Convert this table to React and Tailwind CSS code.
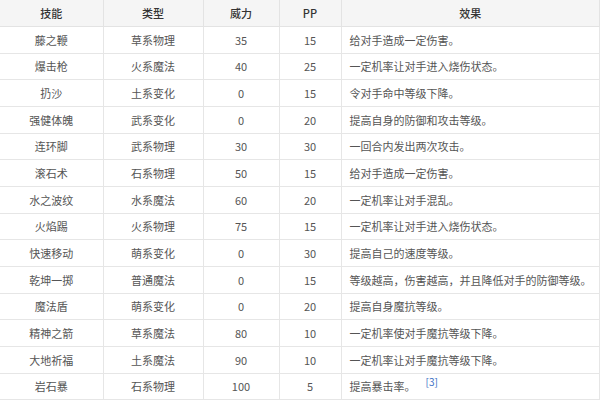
import React from 'react';

const rows = [
  ['藤之鞭', '草系物理', '35', '15', '给对手造成一定伤害。'],
  ['爆击枪', '火系魔法', '40', '25', '一定机率让对手进入烧伤状态。'],
  ['扔沙', '土系变化', '0', '15', '令对手命中等级下降。'],
  ['强健体魄', '武系变化', '0', '20', '提高自身的防御和攻击等级。'],
  ['连环脚', '武系物理', '30', '30', '一回合内发出两次攻击。'],
  ['滚石术', '石系物理', '50', '15', '给对手造成一定伤害。'],
  ['水之波纹', '水系魔法', '60', '20', '一定机率让对手混乱。'],
  ['火焰踢', '火系物理', '75', '15', '一定机率让对手进入烧伤状态。'],
  ['快速移动', '萌系变化', '0', '30', '提高自己的速度等级。'],
  ['乾坤一掷', '普通魔法', '0', '15', '等级越高，伤害越高，并且降低对手的防御等级。'],
  ['魔法盾', '萌系变化', '0', '20', '提高自身魔抗等级。'],
  ['精神之箭', '草系魔法', '80', '10', '一定机率使对手魔抗等级下降。'],
  ['大地祈福', '土系魔法', '90', '10', '一定机率让对手魔抗等级下降。'],
  ['岩石暴', '石系物理', '100', '5', '提高暴击率。'],
];

const App = () => {
  return (
    <div className="w-[600px] h-[400px] overflow-hidden bg-white" style={{ fontFamily: '"Noto Sans CJK SC", "Noto Sans", sans-serif' }}>
      <table className="w-full table-fixed border-collapse text-[11px] text-[#555]">
        <colgroup>
          <col className="w-[103px]" />
          <col className="w-[100px]" />
          <col className="w-[76px]" />
          <col className="w-[62px]" />
          <col />
        </colgroup>
        <thead>
          <tr className="h-[26.67px] bg-[#f5f5f5]">
            <th className="font-medium text-[#333] border-r border-b border-[#e3e3e3]">技能</th>
            <th className="font-medium text-[#333] border-r border-b border-[#e3e3e3]">类型</th>
            <th className="font-medium text-[#333] border-r border-b border-[#e3e3e3]">威力</th>
            <th className="font-medium text-[#333] border-r border-b border-[#e3e3e3]">PP</th>
            <th className="font-medium text-[#333] border-r border-b border-[#e3e3e3]">效果</th>
          </tr>
        </thead>
        <tbody>
          {rows.map((r, i) => (
            <tr key={i} className="h-[26.67px]">
              <td className="text-center border-r border-b border-[#e6e6e6]">{r[0]}</td>
              <td className="text-center border-r border-b border-[#e6e6e6]">{r[1]}</td>
              <td className="text-center border-r border-b border-[#e6e6e6]">{r[2]}</td>
              <td className="text-center border-r border-b border-[#e6e6e6]">{r[3]}</td>
              <td className="pl-[8px] whitespace-nowrap border-r border-b border-[#e6e6e6]">
                {r[4]}
                {i === rows.length - 1 && (
                  <sup className="ml-[10px] text-[10px] text-[#3b6fc4]">[3]</sup>
                )}
              </td>
            </tr>
          ))}
        </tbody>
      </table>
    </div>
  );
};

export default App;
